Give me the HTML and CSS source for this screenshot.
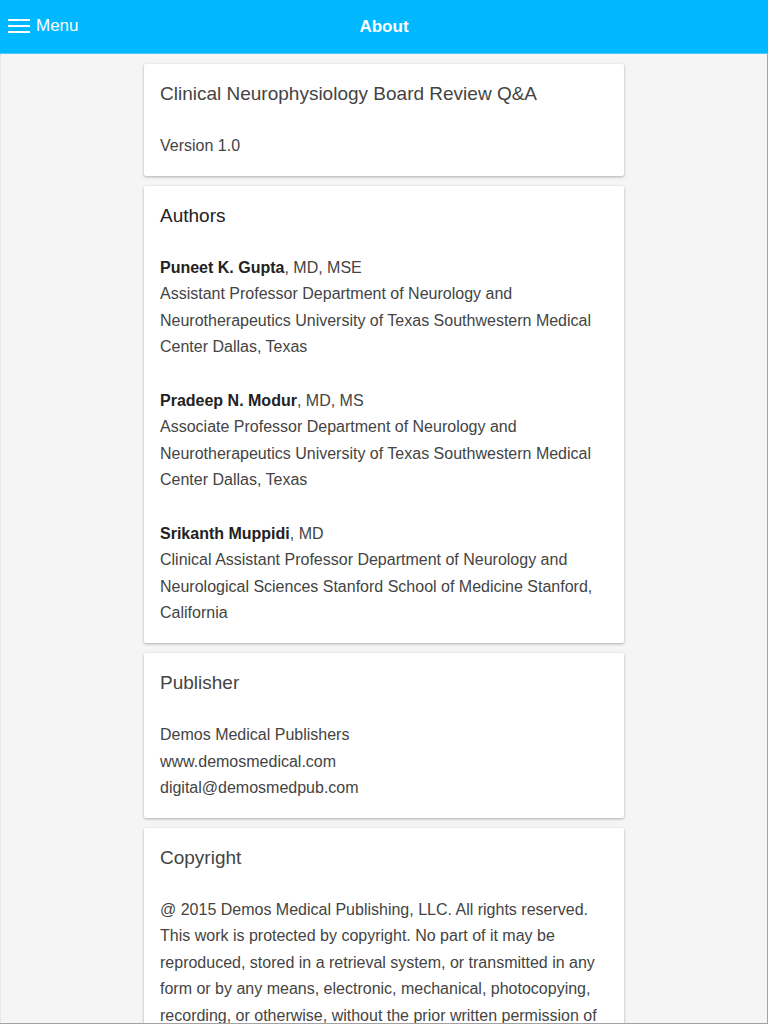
FILE: index.html
```html
<!DOCTYPE html>
<html lang="en">
<head>
<meta charset="utf-8">
<title>About</title>
<link rel="stylesheet" href="styles.css">
</head>
<body>
<div class="app">
  <header class="bar">
    <button class="menu-btn">
      <svg class="burger" width="22" height="16" viewBox="0 0 22 16" aria-hidden="true">
        <rect x="0" y="1" width="22" height="2" fill="#fff"/>
        <rect x="0" y="7" width="22" height="2" fill="#fff"/>
        <rect x="0" y="13" width="22" height="2" fill="#fff"/>
      </svg>
      <span>Menu</span>
    </button>
    <h1 class="bar-title">About</h1>
  </header>
  <main class="content">
    <section class="card">
      <h2 class="card-title">Clinical Neurophysiology Board Review Q&amp;A</h2>
      <div class="card-body"><p>Version 1.0</p></div>
    </section>
    <section class="card">
      <h2 class="card-title dark">Authors</h2>
      <div class="card-body">
        <p><b>Puneet K. Gupta</b>, MD, MSE<br>Assistant Professor Department of Neurology and Neurotherapeutics University of Texas Southwestern Medical Center Dallas, Texas</p>
        <p><b>Pradeep N. Modur</b>, MD, MS<br>Associate Professor Department of Neurology and Neurotherapeutics University of Texas Southwestern Medical Center Dallas, Texas</p>
        <p><b>Srikanth Muppidi</b>, MD<br>Clinical Assistant Professor Department of Neurology and Neurological Sciences Stanford School of Medicine Stanford, California</p>
      </div>
    </section>
    <section class="card">
      <h2 class="card-title">Publisher</h2>
      <div class="card-body"><p>Demos Medical Publishers<br>www.demosmedical.com<br>digital@demosmedpub.com</p></div>
    </section>
    <section class="card">
      <h2 class="card-title">Copyright</h2>
      <div class="card-body"><p>@ 2015 Demos Medical Publishing, LLC. All rights reserved. This work is protected by copyright. No part of it may be reproduced, stored in a retrieval system, or transmitted in any form or by any means, electronic, mechanical, photocopying, recording, or otherwise, without the prior written permission of the publisher.</p></div>
    </section>
  </main>
</div>
<div class="frame"></div>
</body>
</html>
```

FILE: styles.css
```css
* { box-sizing: border-box; }
html, body { margin: 0; padding: 0; }
body {
  font-family: "Liberation Sans", Arial, sans-serif;
  background: #f5f5f5;
  color: #444;
  height: 1024px;
  overflow: hidden;
}
.app { display: flex; flex-direction: column; height: 100%; }
.bar {
  position: relative;
  height: 54px;
  flex: none;
  background: #00b8ff;
  border-bottom: 1px solid #4ccaff;
  display: flex;
  align-items: center;
}
.menu-btn {
  display: flex;
  align-items: center;
  gap: 6px;
  background: none;
  border: 0;
  padding: 0 0 0 8px;
  margin-top: -1px;
  color: #fff;
  font: 17px "Liberation Sans", Arial, sans-serif;
}
.burger { display: block; }
.bar-title {
  position: absolute;
  left: 0; right: 0; top: 0;
  margin: 0;
  text-align: center;
  line-height: 54px;
  font-size: 17px;
  font-weight: bold;
  color: #fff;
  pointer-events: none;
}
.content {
  flex: 1;
  display: flex;
  flex-direction: column;
  align-items: center;
  gap: 10px;
  padding-top: 10px;
  border-left: 1px dotted #dcdcdc;
  border-right: 1px solid #a3a3a3;
}
.card {
  width: 480px;
  background: #fff;
  border-radius: 2px;
  box-shadow: 0 1px 3px rgba(0,0,0,0.3);
  padding: 18px 16px 16px;
  flex: none;
}
.card-title {
  margin: 0;
  font-size: 19px;
  font-weight: normal;
  line-height: 24px;
  color: #444;
}
.card-title.dark { color: #222; }
.card-body { margin-top: 27px; font-size: 16px; line-height: 26.6px; color: #444; }
.card-body p { margin: 0; }
.card-body p + p { margin-top: 26.6px; }
.card-body b { color: #222; }
.frame {
  position: fixed;
  left: 0; right: 0; bottom: 0;
  height: 1px;
  background: #a3a3a3;
}
```
